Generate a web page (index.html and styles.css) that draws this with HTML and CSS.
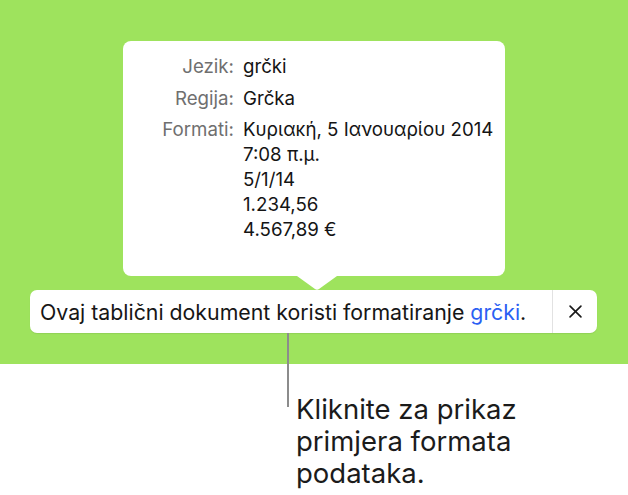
FILE: index.html
```html
<!DOCTYPE html>
<html lang="hr">
<head>
<meta charset="utf-8">
<link rel="stylesheet" href="styles.css">
</head>
<body>
<div class="stage">
  <div class="popover-wrap">
    <div class="popover">
      <div class="row">
        <div class="label">Jezik:</div>
        <div class="value">grčki</div>
      </div>
      <div class="row">
        <div class="label">Regija:</div>
        <div class="value">Grčka</div>
      </div>
      <div class="row">
        <div class="label">Formati:</div>
        <div class="value">Κυριακή, 5 Ιανουαρίου 2014<br>7:08 π.μ.<br>5/1/14<br>1.234,56<br>4.567,89 €</div>
      </div>
    </div>
    <svg class="arrow" width="40" height="14" viewBox="0 0 40 14"><path d="M0 0 H40 L22 13 Q20 14.5 18 13 Z" fill="#fff"/></svg>
  </div>
  <div class="banner">
    <div class="banner-text">Ovaj tablični dokument koristi formatiranje <span class="link">grčki</span>.</div>
    <div class="close"><svg width="13" height="13" viewBox="0 0 12 12"><path d="M1 1 L11 11 M11 1 L1 11" stroke="#1a1a1a" stroke-width="1.5" stroke-linecap="round"/></svg></div>
  </div>
  <div class="callout">
    <div class="callout-line"></div>
    <div class="callout-text">Kliknite za prikaz<br>primjera formata<br>podataka.</div>
  </div>
</div>
</body>
</html>
```
FILE: styles.css
```css
html, body {
  margin: 0;
  padding: 0;
}
body {
  font-family: Inter, "Liberation Sans", sans-serif;
}
.stage {
  width: 628px;
  height: 495px;
  background: linear-gradient(to bottom, #9ee35d 0, #9ee35d 364px, #ffffff 364px);
  overflow: hidden;
}
.popover-wrap {
  margin-left: 123px;
  padding-top: 41px;
  width: 382px;
}
.popover {
  box-sizing: border-box;
  height: 235px;
  background: #fff;
  border-radius: 8px;
  padding-top: 13px;
  display: flex;
  flex-direction: column;
  gap: 6.5px;
}
.row {
  display: grid;
  grid-template-columns: 111px auto;
  column-gap: 9px;
  font-size: 18.7px;
  line-height: 25px;
}
.label {
  text-align: right;
  color: #6f6f6f;
}
.value {
  color: #141414;
}
.arrow {
  display: block;
  margin-left: 174px;
}
.banner {
  margin-left: 30px;
  width: 567px;
  height: 43px;
  background: #fff;
  border-radius: 7px;
  display: flex;
  align-items: stretch;
  box-shadow: 0 1px 1px rgba(0,0,0,0.08);
}
.banner-text {
  flex: 1;
  display: flex;
  align-items: center;
  padding-left: 10px;
  font-size: 21.3px;
  color: #161616;
  white-space: pre;
}
.link {
  color: #2b5ff3;
}
.close {
  width: 44px;
  border-left: 1px solid #e2e2e2;
  display: flex;
  align-items: center;
  justify-content: center;
}
.callout {
  display: flex;
  margin-left: 287px;
}
.callout-line {
  width: 2px;
  height: 74px;
  background: #8c8c8c;
}
.callout-text {
  margin-left: 7px;
  margin-top: 60px;
  font-size: 27.5px;
  line-height: 32px;
  color: #1b1b1b;
}
```
